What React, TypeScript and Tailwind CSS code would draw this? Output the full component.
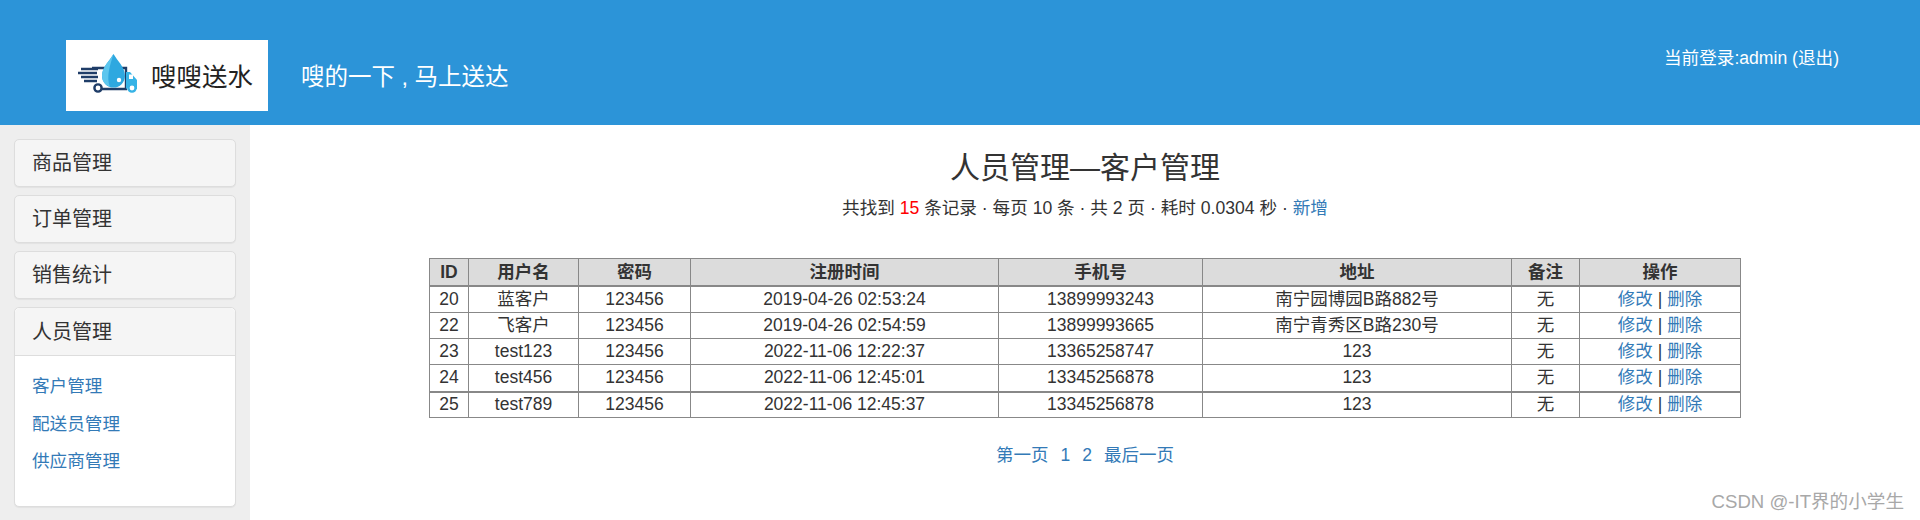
const rows = [
  ["20", "蓝客户", "123456", "2019-04-26 02:53:24", "13899993243", "南宁园博园B路882号"],
  ["22", "飞客户", "123456", "2019-04-26 02:54:59", "13899993665", "南宁青秀区B路230号"],
  ["23", "test123", "123456", "2022-11-06 12:22:37", "13365258747", "123"],
  ["24", "test456", "123456", "2022-11-06 12:45:01", "13345256878", "123"],
  ["25", "test789", "123456", "2022-11-06 12:45:37", "13345256878", "123"],
];
const heads: [string, string][] = [
  ["ID", "w-[39px]"],
  ["用户名", "w-[110px]"],
  ["密码", "w-[112px]"],
  ["注册时间", "w-[308px]"],
  ["手机号", "w-[204px]"],
  ["地址", "w-[309px]"],
  ["备注", "w-[68px]"],
  ["操作", "w-[161px]"],
];

function Logo() {
  return (
    <svg viewBox="0 0 60 42" className="w-[60px] h-[42px] mb-[6px] shrink-0" aria-hidden="true">
      <g transform="translate(0 -2)">
        <path d="M14 17h34v21H20" fill="none" stroke="#1f3d68" strokeWidth="2.4" />
        <path d="M48 21h4l7 8v9h-4a5 5 0 0 0-7 0z" fill="#36b3e6" />
        <rect x="51" y="23.5" width="4" height="4.5" fill="#fff" />
        <path d="M3 18h17M0 22h19M3 26h17M6 30h13" stroke="#1f3d68" strokeWidth="2.4" fill="none" />
        <circle cx="20" cy="37" r="3.6" fill="#fff" stroke="#1f3d68" strokeWidth="2.4" />
        <circle cx="54" cy="37" r="3.6" fill="#fff" stroke="#36b3e6" strokeWidth="2.4" />
      </g>
      <path d="M35.5 1c4 7 11.500 13 11.500 22a11.500 11.500 0 0 1-23 0c0-9 7.500-15 11.500-22z" fill="#2ea8e0" />
      <path d="M35.500 1c-4 7-11.500 13-11.500 22a11.500 11.500 0 0 0 8 11C28 24 32 12 35.500 1z" fill="#5cc6ee" />
      <circle cx="41" cy="27" r="2.2" fill="#fff" />
    </svg>
  );
}

function Panel({ title }: { title: string }) {
  return (
    <div className="h-[48px] flex items-center px-[17px] bg-[#f5f5f5] border border-[#ddd] rounded-[5px] shadow-[0_1px_1px_rgba(0,0,0,0.05)] text-[20px] text-[#333]">
      {title}
    </div>
  );
}

export default function App() {
  return (
    <div
      className="relative w-[1920px] h-[520px] overflow-hidden bg-white text-[#333] text-[17.5px]"
      style={{ fontFamily: '"Liberation Sans", "Noto Sans CJK SC", sans-serif' }}
    >
      <header className="h-[125px] bg-[#2c94d8] flex text-white">
        <div className="ml-[66px] mt-[40px] w-[202px] h-[71px] bg-white flex items-center pl-[12px] pt-[3px] text-[#222] text-[25.500px]">
          <Logo />
          <span className="ml-[13px] mt-[1px]">嗖嗖送水</span>
        </div>
        <div className="ml-[33px] mt-[61px] text-[23.5px] leading-[32px]">嗖的一下 , 马上送达</div>
        <div className="ml-auto mr-[81px] mt-[46px] text-[17.6px] leading-[24px]">当前登录:admin (退出)</div>
      </header>
      <div className="flex h-[395px]">
        <aside className="w-[250px] shrink-0 bg-[#eeeeee] px-[14px] pt-[14px] flex flex-col gap-[8px]">
          <Panel title="商品管理" />
          <Panel title="订单管理" />
          <Panel title="销售统计" />
          <div className="h-[200px] bg-white border border-[#ddd] rounded-[5px] shadow-[0_1px_1px_rgba(0,0,0,0.05)]">
            <div className="h-[48px] flex items-center px-[17px] bg-[#f5f5f5] border-b border-[#ddd] rounded-t-[5px] text-[20px] text-[#333]">
              人员管理
            </div>
            <div className="pl-[17px] pt-[18px] flex flex-col text-[#337ab7] text-[17.6px] leading-[24px]">
              <a className="h-[38px]">客户管理</a>
              <a className="h-[37px]">配送员管理</a>
              <a>供应商管理</a>
            </div>
          </div>
        </aside>
        <main className="flex-1 flex flex-col items-center">
          <h3 className="mt-[25px] text-[30px] leading-[36px] font-normal">人员管理—客户管理</h3>
          <p className="mt-[10px] text-[17.6px] leading-[24px]">
            共找到 <span className="text-[#ff0000]">15</span> 条记录 · 每页 10 条 · 共 2 页 · 耗时 0.0304 秒 · <a className="text-[#337ab7]">新增</a>
          </p>
          <table className="mt-[38px] w-[1311px] table-fixed border-collapse border border-[#888]">
            <thead>
              <tr className="h-[27px] bg-[#dcdcdc]">
                {heads.map(([h, w]) => (
                  <th key={h} className={`${w} border border-[#888] border-b-2 p-0 font-bold leading-[20px]`}>{h}</th>
                ))}
              </tr>
            </thead>
            <tbody>
              {rows.map((r, n) => (
                <tr key={r[0]} className={n === 0 || n === 3 ? "h-[27px]" : "h-[26px]"}>
                  {r.map((c, i) => (
                    <td key={i} className={`border border-[#888] ${n === 3 ? "border-b-2" : ""} p-0 pb-[1px] text-center leading-[20px]`}>{c}</td>
                  ))}
                  <td className={`border border-[#888] ${n === 3 ? "border-b-2" : ""} p-0 pb-[1px] text-center leading-[20px]`}>无</td>
                  <td className={`border border-[#888] ${n === 3 ? "border-b-2" : ""} p-0 pb-[1px] text-center leading-[20px]`}>
                    <a className="text-[#337ab7]">修改</a> | <a className="text-[#337ab7]">删除</a>
                  </td>
                </tr>
              ))}
            </tbody>
          </table>
          <div className="mt-[25px] flex gap-[12px] text-[#337ab7] leading-[24px]">
            <a>第一页</a>
            <a>1</a>
            <a>2</a>
            <a>最后一页</a>
          </div>
        </main>
      </div>
      <div className="absolute right-[16px] top-[490px] text-[18.6px] leading-[24px] text-[#a8a8a8]">CSDN @-IT界的小学生</div>
    </div>
  );
}
